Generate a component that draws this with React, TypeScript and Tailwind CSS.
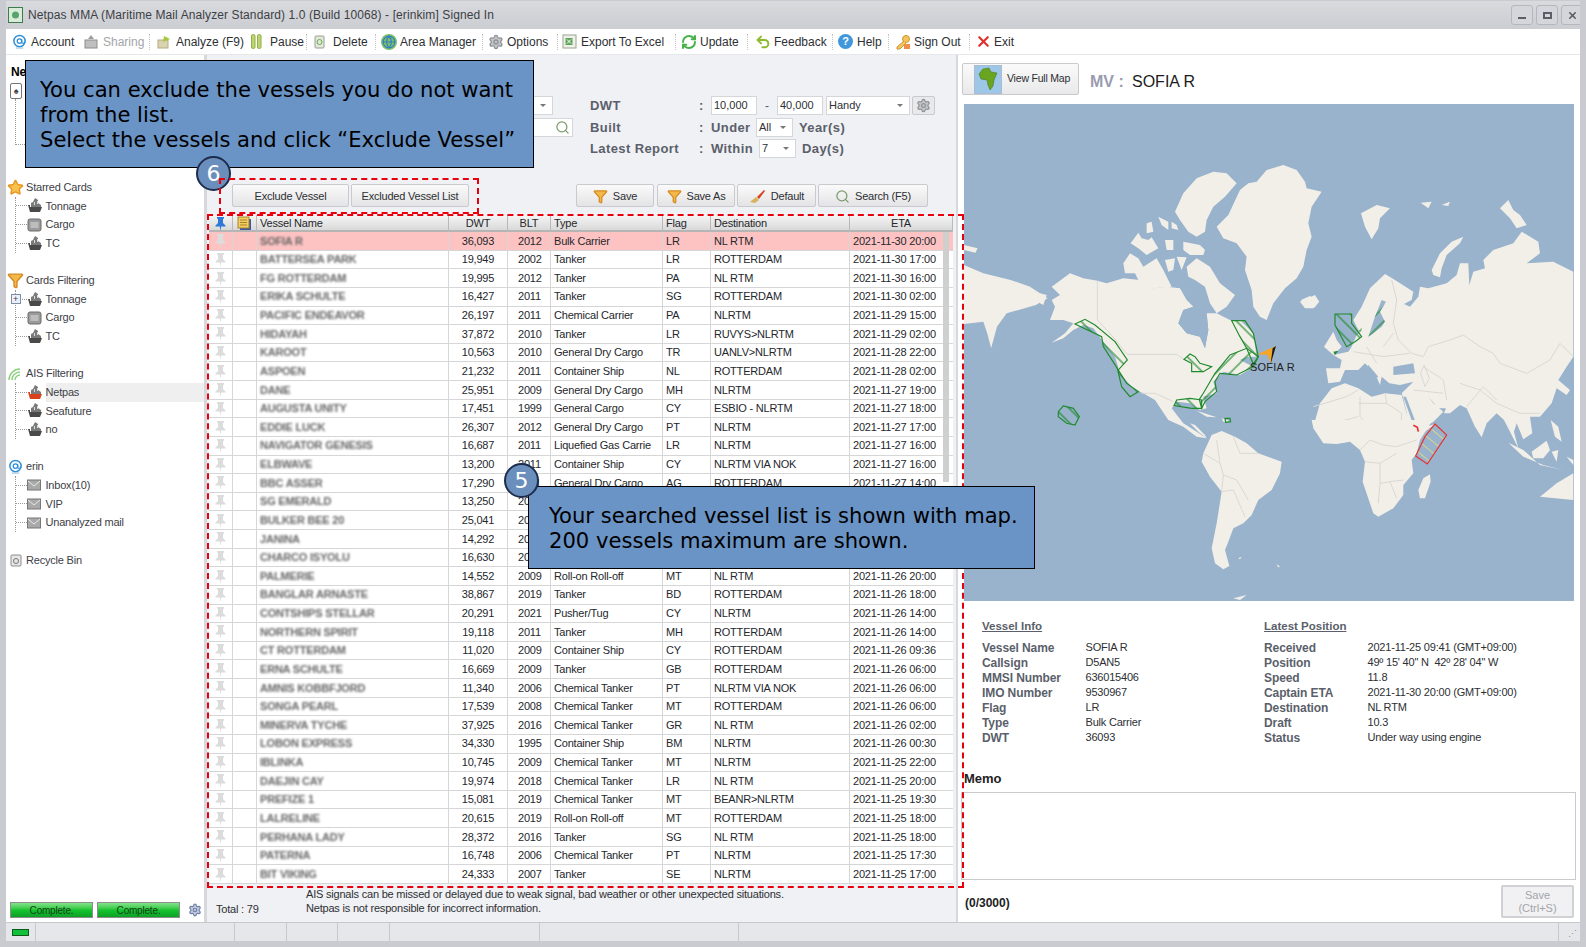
import { Filter, Globe, RefreshCw, Search, Settings, Star, Undo2, X } from "lucide-react";
import type { ReactNode } from "react";

type Row = [string, string, string, string, string, string, string];

const rows: Row[] = [
  ["SOFIA R", "36,093", "2012", "Bulk Carrier", "LR", "NL RTM", "2021-11-30 20:00"],
  ["BATTERSEA PARK", "19,949", "2002", "Tanker", "LR", "ROTTERDAM", "2021-11-30 17:00"],
  ["FG ROTTERDAM", "19,995", "2012", "Tanker", "PA", "NL RTM", "2021-11-30 16:00"],
  ["ERIKA SCHULTE", "16,427", "2011", "Tanker", "SG", "ROTTERDAM", "2021-11-30 02:00"],
  ["PACIFIC ENDEAVOR", "26,197", "2011", "Chemical Carrier", "PA", "NLRTM", "2021-11-29 15:00"],
  ["HIDAYAH", "37,872", "2010", "Tanker", "LR", "RUVYS>NLRTM", "2021-11-29 02:00"],
  ["KAROOT", "10,563", "2010", "General Dry Cargo", "TR", "UANLV>NLRTM", "2021-11-28 22:00"],
  ["ASPOEN", "21,232", "2011", "Container Ship", "NL", "ROTTERDAM", "2021-11-28 02:00"],
  ["DANE", "25,951", "2009", "General Dry Cargo", "MH", "NLRTM", "2021-11-27 19:00"],
  ["AUGUSTA UNITY", "17,451", "1999", "General Cargo", "CY", "ESBIO - NLRTM", "2021-11-27 18:00"],
  ["EDDIE LUCK", "26,307", "2012", "General Dry Cargo", "PT", "NLRTM", "2021-11-27 17:00"],
  ["NAVIGATOR GENESIS", "16,687", "2011", "Liquefied Gas Carrie", "LR", "NLRTM", "2021-11-27 16:00"],
  ["ELBWAVE", "13,200", "2011", "Container Ship", "CY", "NLRTM VIA NOK", "2021-11-27 16:00"],
  ["BBC ASSER", "17,290", "2011", "General Dry Cargo", "AG", "ROTTERDAM", "2021-11-27 14:00"],
  // the next four rows sit behind callout 5, only the start of the year shows
  ["SG EMERALD", "13,250", "20", "", "", "", ""],
  ["BULKER BEE 20", "25,041", "20", "", "", "", ""],
  ["JANINA", "14,292", "20", "", "", "", ""],
  ["CHARCO ISYOLU", "16,630", "20", "", "", "", ""],
  ["PALMERIE", "14,552", "2009", "Roll-on Roll-off", "MT", "NL RTM", "2021-11-26 20:00"],
  ["BANGLAR ARNASTE", "38,867", "2019", "Tanker", "BD", "ROTTERDAM", "2021-11-26 18:00"],
  ["CONTSHIPS STELLAR", "20,291", "2021", "Pusher/Tug", "CY", "NLRTM", "2021-11-26 14:00"],
  ["NORTHERN SPIRIT", "19,118", "2011", "Tanker", "MH", "ROTTERDAM", "2021-11-26 14:00"],
  ["CT ROTTERDAM", "11,020", "2009", "Container Ship", "CY", "ROTTERDAM", "2021-11-26 09:36"],
  ["ERNA SCHULTE", "16,669", "2009", "Tanker", "GB", "ROTTERDAM", "2021-11-26 06:00"],
  ["AMNIS KOBBFJORD", "11,340", "2006", "Chemical Tanker", "PT", "NLRTM VIA NOK", "2021-11-26 06:00"],
  ["SONGA PEARL", "17,539", "2008", "Chemical Tanker", "MT", "ROTTERDAM", "2021-11-26 06:00"],
  ["MINERVA TYCHE", "37,925", "2016", "Chemical Tanker", "GR", "NL RTM", "2021-11-26 02:00"],
  ["LOBON EXPRESS", "34,330", "1995", "Container Ship", "BM", "NLRTM", "2021-11-26 00:30"],
  ["IBLINKA", "10,745", "2009", "Chemical Tanker", "MT", "NLRTM", "2021-11-25 22:00"],
  ["DAEJIN CAY", "19,974", "2018", "Chemical Tanker", "LR", "NL RTM", "2021-11-25 20:00"],
  ["PREFIZE 1", "15,081", "2019", "Chemical Tanker", "MT", "BEANR>NLRTM", "2021-11-25 19:30"],
  ["LALRELINE", "20,615", "2019", "Roll-on Roll-off", "MT", "ROTTERDAM", "2021-11-25 18:00"],
  ["PERHANA LADY", "28,372", "2016", "Tanker", "SG", "NL RTM", "2021-11-25 18:00"],
  ["PATERNA", "16,748", "2006", "Chemical Tanker", "PT", "NLRTM", "2021-11-25 17:30"],
  ["BIT VIKING", "24,333", "2007", "Tanker", "SE", "NLRTM", "2021-11-25 17:00"],
];

const vesselInfo = [
  ["Vessel Name", "SOFIA R", "Received", "2021-11-25 09:41 (GMT+09:00)"],
  ["Callsign", "D5AN5", "Position", "49º 15' 40\" N  42º 28' 04\" W"],
  ["MMSI Number", "636015406", "Speed", "11.8"],
  ["IMO Number", "9530967", "Captain ETA", "2021-11-30 20:00 (GMT+09:00)"],
  ["Flag", "LR", "Destination", "NL RTM"],
  ["Type", "Bulk Carrier", "Draft", "10.3"],
  ["DWT", "36093", "Status", "Under way using engine"],
];

function ShipIcon({ color = "#4a4a4a", accent = "#7a7a7a" }: { color?: string; accent?: string }) {
  return (
    <svg width="15" height="15" viewBox="0 0 15 15" className="shrink-0">
      <path d="M8 0l3 2v3l3 2v2H4V5l2-1z" fill={accent} />
      <path d="M1 7h2v2l12 0-2 5H3z" fill={color} />
      <path d="M10 3h1v3h-1zM7 4h1v3H7z" fill="#ddd" />
    </svg>
  );
}

function CargoIcon() {
  return (
    <svg width="15" height="14" viewBox="0 0 15 14" className="shrink-0">
      <rect x="1" y="1" width="13" height="12" rx="2" fill="#9a9a9a" stroke="#6c6c6c" />
      <rect x="3.500" y="4" width="8" height="6" fill="#bdbdbd" />
    </svg>
  );
}

function MailIcon() {
  return (
    <svg width="14" height="12" viewBox="0 0 14 12" className="shrink-0">
      <rect x="0.500" y="1" width="13" height="10" fill="#a9a9a9" stroke="#777" />
      <path d="M1 2l6 5 6-5" fill="none" stroke="#e8e8e8" />
    </svg>
  );
}

function AtIcon({ size = 15 }: { size?: number }) {
  return (
    <svg width={size} height={size} viewBox="0 0 16 16" className="shrink-0">
      <circle cx="8" cy="7.500" r="6" fill="none" stroke="#2f8fd8" strokeWidth="1.600" />
      <circle cx="8" cy="7.500" r="2.400" fill="none" stroke="#2f8fd8" strokeWidth="1.400" />
      <path d="M10.400 5.500v3.400c0 1.600 3.200 1.200 3.500-.8" fill="none" stroke="#2f8fd8" strokeWidth="1.200" />
      <path d="M4 15h8" stroke="#a9c9e6" strokeWidth="1.400" />
    </svg>
  );
}

function Pin({ color = "#dcdcdc" }: { color?: string }) {
  return (
    <svg width="13" height="15" viewBox="0 0 13 15">
      <path d="M3 1h7v1.500L9 3v4l2.500 2.500V10.500H7.200L6.500 15l-.7-4.500H1.500V9.500L4 7V3L3 2.500z" fill={color} />
    </svg>
  );
}

function Tool({ icon, label, width, muted }: { icon: ReactNode; label: string; width: string; muted?: boolean }) {
  return (
    <div className={`flex h-full shrink-0 items-center ${width} ${muted ? "text-[#a3a5a9]" : "text-[#2d2f33]"}`}>
      <span className="flex w-[19px] shrink-0 items-center">{icon}</span>
      <span className="whitespace-nowrap pt-[1px]">{label}</span>
    </div>
  );
}

function Sep() {
  return <span className="h-[16px] w-px shrink-0 border-l border-dotted border-[#c4c4c4]" />;
}

function Toolbar() {
  return (
    <div className="flex h-[26px] shrink-0 items-center border-b border-[#e6e7ea] bg-white pl-[6px] text-[12px]">
      <Tool width="w-[72px]" label="Account" icon={<AtIcon />} />
      <Tool
        width="w-[65px]"
        muted
        label="Sharing"
        icon={
          <svg width="14" height="15" viewBox="0 0 14 15">
            <rect x="1" y="6" width="12" height="8" fill="#bfbfbf" stroke="#8d8d8d" />
            <path d="M4 5l3-4 3 4z" fill="#9d9d9d" />
          </svg>
        }
      />
      <Sep />
      <div className="ml-[7px] h-full">
        <Tool
          width="w-[94px]"
          label="Analyze (F9)"
          icon={
            <svg width="14" height="14" viewBox="0 0 14 14">
              <rect x="1" y="5" width="10" height="8" fill="#d9d3b0" stroke="#b5ac85" />
              <path d="M6 7l1-6 6 3z" fill="#a7c83c" />
            </svg>
          }
        />
      </div>
      <Tool
        width="w-[55px]"
        label="Pause"
        icon={
          <svg width="11" height="15" viewBox="0 0 11 15">
            <rect x="0.500" y="0.500" width="3.500" height="14" rx="1.500" fill="#bdd66b" stroke="#93ae49" />
            <rect x="6.500" y="0.500" width="3.500" height="14" rx="1.500" fill="#bdd66b" stroke="#93ae49" />
          </svg>
        }
      />
      <Sep />
      <div className="ml-[7px] h-full">
        <Tool
          width="w-[61px]"
          label="Delete"
          icon={
            <svg width="11" height="15" viewBox="0 0 11 15">
              <rect x="1" y="2" width="9" height="12" rx="1" fill="#e4e8dc" stroke="#9aa091" />
              <circle cx="5.500" cy="8" r="2.500" fill="none" stroke="#62ad4f" />
            </svg>
          }
        />
      </div>
      <Sep />
      <div className="ml-[5px] h-full">
        <Tool
          width="w-[101px]"
          label="Area Manager"
          icon={
            <span className="flex size-[16px] items-center justify-center rounded-full bg-[#7fbf6a]">
              <Globe size={14} color="#2f7fc2" strokeWidth={2} />
            </span>
          }
        />
      </div>
      <Sep />
      <div className="ml-[5px] h-full">
        <Tool width="w-[69px]" label="Options" icon={<Settings size={16} color="#8f9296" fill="#c4c6c9" />} />
      </div>
      <Sep />
      <div className="ml-[4px] h-full">
        <Tool
          width="w-[113px]"
          label="Export To Excel"
          icon={
            <svg width="15" height="15" viewBox="0 0 15 15">
              <rect x="1" y="1" width="13" height="13" fill="#eef1ea" stroke="#9aa48f" />
              <rect x="3.500" y="4" width="7" height="7" fill="#5fa35a" />
              <path d="M5 5.500l4 4M9 5.500l-4 4" stroke="#fff" />
            </svg>
          }
        />
      </div>
      <Sep />
      <div className="ml-[5px] h-full">
        <Tool width="w-[66px]" label="Update" icon={<RefreshCw size={16} color="#47b24a" strokeWidth={3} />} />
      </div>
      <Sep />
      <div className="ml-[7px] h-full">
        <Tool width="w-[77px]" label="Feedback" icon={<Undo2 size={16} color="#8dbb2f" strokeWidth={3} />} />
      </div>
      <Sep />
      <div className="ml-[5px] h-full">
        <Tool
          width="w-[50px]"
          label="Help"
          icon={
            <span className="flex size-[15px] items-center justify-center rounded-full bg-[#3f97dc] text-[11px] font-bold text-white">
              ?
            </span>
          }
        />
      </div>
      <Sep />
      <div className="ml-[6px] h-full">
        <Tool
          width="w-[74px]"
          label="Sign Out"
          icon={
            <svg width="17" height="16" viewBox="0 0 17 16">
              <circle cx="11" cy="5" r="3.500" fill="#f3c65c" stroke="#cf9430" />
              <path d="M9 7l-7 6v2h3l6-6" fill="#f3c65c" stroke="#cf9430" />
              <rect x="9" y="10" width="6" height="5" fill="#ef8d4a" />
            </svg>
          }
        />
      </div>
      <Sep />
      <div className="ml-[5px] h-full">
        <Tool width="w-[50px]" label="Exit" icon={<X size={17} color="#e0322c" strokeWidth={3} />} />
      </div>
    </div>
  );
}

function TreeGroup({ icon, label, children }: { icon: ReactNode; label: string; children?: ReactNode }) {
  return (
    <div>
      <div className="flex h-[18.63px] items-center">
        <span className="flex w-[19px] shrink-0 justify-center">{icon}</span>
        <span className="ml-[1px] whitespace-nowrap">{label}</span>
      </div>
      {children ? <div className="ml-[8.500px] border-l border-dotted border-[#9a9a9a]">{children}</div> : null}
    </div>
  );
}

function TreeItem({ icon, label, active, expander }: { icon: ReactNode; label: string; active?: boolean; expander?: boolean }) {
  return (
    <div className="relative flex h-[18.63px] items-center">
      <span className="h-px w-[11px] shrink-0 border-t border-dotted border-[#9a9a9a]" />
      {expander ? (
        <span className="absolute left-[-5px] flex size-[10px] items-center justify-center border border-[#7f8ea8] bg-[#eef2f8] text-[9px] leading-none text-[#33415c]">
          +
        </span>
      ) : null}
      <span className="flex w-[19px] shrink-0">{icon}</span>
      <span className={`flex h-full flex-1 items-center whitespace-nowrap ${active ? "bg-[#efefef]" : ""}`}>{label}</span>
    </div>
  );
}

function LeftPanel() {
  return (
    <div className="flex w-[198px] shrink-0 flex-col bg-white text-[11px] tracking-[-0.2px] text-[#3d4046]">
      <div className="h-[123px] shrink-0 pl-[5px] pt-[8px]">
        <div className="text-[12px] font-bold text-black">Ne</div>
        <div className="ml-[-1px] mt-[2px] flex h-[16px] w-[12px] items-center justify-center rounded-[2px] border border-[#777] text-[9px] leading-none">♠</div>
        <div className="ml-[4px] h-[46px] w-[12px] border-b border-l border-dotted border-[#9a9a9a]" />
      </div>
      <TreeGroup icon={<Star size={17} color="#e8951f" fill="#f7c14a" />} label="Starred Cards">
        <TreeItem icon={<ShipIcon />} label="Tonnage" />
        <TreeItem icon={<CargoIcon />} label="Cargo" />
        <TreeItem icon={<ShipIcon />} label="TC" />
      </TreeGroup>
      <div className="h-[18.63px]" />
      <TreeGroup icon={<Filter size={17} color="#d58a1c" fill="#f2b84a" />} label="Cards Filtering">
        <TreeItem icon={<ShipIcon />} label="Tonnage" expander />
        <TreeItem icon={<CargoIcon />} label="Cargo" />
        <TreeItem icon={<ShipIcon />} label="TC" />
      </TreeGroup>
      <div className="h-[18.63px]" />
      <TreeGroup
        icon={
          <svg width="17" height="16" viewBox="0 0 17 16">
            <path d="M2 14a11 11 0 0 1 11-11M5 14a8 8 0 0 1 8-8M8 14a5 5 0 0 1 5-5" fill="none" stroke="#8ccf7e" strokeWidth="1.400" />
          </svg>
        }
        label="AIS Filtering"
      >
        <TreeItem icon={<ShipIcon color="#d9401c" />} label="Netpas" active />
        <TreeItem icon={<ShipIcon />} label="Seafuture" />
        <TreeItem icon={<ShipIcon />} label="no" />
      </TreeGroup>
      <div className="h-[18.63px]" />
      <TreeGroup icon={<AtIcon />} label="erin">
        <TreeItem icon={<MailIcon />} label="Inbox(10)" />
        <TreeItem icon={<MailIcon />} label="VIP" />
        <TreeItem icon={<MailIcon />} label="Unanalyzed mail" />
      </TreeGroup>
      <div className="h-[18.63px]" />
      <TreeGroup
        icon={
          <svg width="12" height="14" viewBox="0 0 12 14">
            <rect x="1" y="2" width="10" height="11" rx="1" fill="#e6e6e6" stroke="#8e8e8e" />
            <circle cx="6" cy="8" r="2.500" fill="none" stroke="#777" />
          </svg>
        }
        label="Recycle Bin"
      />
      <div className="mt-auto flex h-[20px] items-start gap-[4px] pl-[4px]">
        <GreenBar />
        <GreenBar />
        <Settings size={14} color="#6f7fa5" fill="#c3cbe0" className="ml-[4px] mt-[1px]" />
      </div>
    </div>
  );
}

function GreenBar() {
  return (
    <div className="flex h-[16px] w-[83px] items-center justify-center border border-[#8d8d8d] bg-gradient-to-b from-[#7fe38a] via-[#14c52f] to-[#0da026] text-[10px] text-[#14401a]">
      Complete.
    </div>
  );
}

function Field({ children, className, arrow }: { children?: ReactNode; className: string; arrow?: boolean }) {
  return (
    <div className={`flex h-[19px] shrink-0 items-center justify-between border border-[#d5d6da] bg-white pl-[2px] pr-[6px] text-[11px] text-[#2d2f33] ${className}`}>
      <span>{children}</span>
      {arrow ? <span className="size-0 border-x-[3px] border-t-[3px] border-x-transparent border-t-[#777]" /> : null}
    </div>
  );
}

function Btn({ children, className }: { children: ReactNode; className: string }) {
  return (
    <div className={`flex h-full shrink-0 items-center justify-center gap-[5px] rounded-[2px] border border-[#c9cacd] bg-gradient-to-b from-[#fafafa] to-[#e4e4e6] pt-[1px] text-[11px] tracking-[-0.2px] text-[#2d2f33] ${className}`}>
      {children}
    </div>
  );
}

function FormLabel({ children }: { children: ReactNode }) {
  return <span className="w-[109px] shrink-0 text-[13px] font-bold tracking-[0.4px] text-[#5b5f6b]">{children}</span>;
}

function Colon() {
  return <span className="w-[12px] shrink-0 text-[13px] font-bold text-[#5b5f6b]">:</span>;
}

function SearchForm() {
  return (
    <div className="flex h-[129px] shrink-0 pl-[213px] pt-[41px]">
      <div className="w-[170px] shrink-0">
        <Field className="w-[133px]" arrow />
        <div className="relative mt-[3px] h-[19px] w-[153px] border border-[#d5d6da] bg-white">
          <Search size={15} color="#7d9a6a" className="absolute right-[2px] top-[1px]" />
        </div>
      </div>
      <div className="flex flex-col">
        <div className="flex h-[19px] items-center">
          <FormLabel>DWT</FormLabel>
          <Colon />
          <Field className="w-[46px]">10,000</Field>
          <span className="w-[20px] text-center text-[12px] text-[#5b5f6b]">-</span>
          <Field className="w-[46px]">40,000</Field>
          <Field className="ml-[3px] w-[84px]" arrow>Handy</Field>
          <div className="ml-[2px] flex h-[19px] w-[23px] items-center justify-center rounded-[2px] border border-[#c9cacd] bg-[#e9e9eb]">
            <Settings size={15} color="#8f9296" fill="#c4c6c9" />
          </div>
        </div>
        <div className="mt-[3px] flex h-[19px] items-center">
          <FormLabel>Built</FormLabel>
          <Colon />
          <span className="w-[45px] shrink-0 text-[13px] font-bold tracking-[0.4px] text-[#5b5f6b]">Under</span>
          <Field className="w-[37px]" arrow>All</Field>
          <span className="ml-[6px] text-[13px] font-bold tracking-[0.4px] text-[#5b5f6b]">Year(s)</span>
        </div>
        <div className="mt-[2px] flex h-[19px] items-center">
          <FormLabel>Latest Report</FormLabel>
          <Colon />
          <span className="w-[48px] shrink-0 text-[13px] font-bold tracking-[0.4px] text-[#5b5f6b]">Within</span>
          <Field className="w-[37px]" arrow>7</Field>
          <span className="ml-[6px] text-[13px] font-bold tracking-[0.4px] text-[#5b5f6b]">Day(s)</span>
        </div>
      </div>
    </div>
  );
}

function ActionRow() {
  return (
    <div className="flex h-[23px] shrink-0 pl-[25px]">
      <Btn className="w-[117px]">Exclude Vessel</Btn>
      <Btn className="ml-[2px] w-[118px]">Excluded Vessel List</Btn>
      <Btn className="ml-[107px] w-[78px]">
        <Filter size={15} color="#d58a1c" fill="#f2b84a" /> Save
      </Btn>
      <Btn className="ml-[3px] w-[78px]">
        <Filter size={15} color="#d58a1c" fill="#f2b84a" /> Save As
      </Btn>
      <Btn className="ml-[2px] w-[79px]">
        <svg width="17" height="15" viewBox="0 0 17 15">
          <path d="M1 13l6-5 3 3-4 3z" fill="#d8b25e" />
          <path d="M8 8l7-7 1 1-6 8z" fill="#d9401c" />
        </svg>
        Default
      </Btn>
      <Btn className="ml-[2px] w-[110px]">
        <Search size={15} color="#7d9a6a" /> Search (F5)
      </Btn>
    </div>
  );
}

function HeaderCell({ children, className }: { children?: ReactNode; className?: string }) {
  return <div className={`flex items-center border-r border-[#b9b9b9] px-[3px] ${className ?? ""}`}>{children}</div>;
}

function VesselTable() {
  return (
    <div className="relative ml-[2px] mt-[8px] w-[744px] shrink-0 text-[11px] tracking-[-0.2px] text-[#25272b]">
      <div className="grid h-[17px] grid-cols-[24px_24px_192px_59px_43px_112px_48px_139px_1fr] border-b-2 border-[#b5b5b5] bg-gradient-to-b from-[#f6f6f6] to-[#d9d9d9]">
        <HeaderCell className="justify-center"><Pin color="#2f78d8" /></HeaderCell>
        <HeaderCell className="justify-center">
          <svg width="15" height="15" viewBox="0 0 15 15">
            <rect x="3" y="3" width="11" height="11" fill="#3b5aa0" />
            <rect x="1" y="1" width="11" height="11" fill="#f3cf62" stroke="#a9802a" />
            <path d="M3 4h7M3 6.500h7M3 9h7" stroke="#a9802a" />
          </svg>
        </HeaderCell>
        <HeaderCell>Vessel Name</HeaderCell>
        <HeaderCell className="justify-center">DWT</HeaderCell>
        <HeaderCell className="justify-center">BLT</HeaderCell>
        <HeaderCell>Type</HeaderCell>
        <HeaderCell>Flag</HeaderCell>
        <HeaderCell>Destination</HeaderCell>
        <HeaderCell className="justify-center">ETA</HeaderCell>
      </div>
      {rows.map((row, index) => (
        <div
          key={row[0]}
          className={`grid h-[18.63px] grid-cols-[24px_24px_192px_59px_43px_112px_48px_139px_1fr] border-b border-[#d6d6d6] ${index === 0 ? "bg-[#fdc3c3]" : "bg-white"}`}
        >
          <div className="flex items-center justify-center border-r border-[#d6d6d6]"><Pin /></div>
          <div className="border-r border-[#d6d6d6]" />
          <div className="flex items-center border-r border-[#d6d6d6] px-[3px]">
            <span className="whitespace-nowrap font-bold text-[#666] blur-[0.8px]">{row[0]}</span>
          </div>
          <div className="flex items-center justify-center border-r border-[#d6d6d6]">{row[1]}</div>
          <div className="flex items-center border-r border-[#d6d6d6] pl-[10px]">{row[2]}</div>
          <div className="flex items-center overflow-hidden whitespace-nowrap border-r border-[#d6d6d6] px-[3px]">{row[3]}</div>
          <div className="flex items-center border-r border-[#d6d6d6] px-[3px]">{row[4]}</div>
          <div className="flex items-center whitespace-nowrap border-r border-[#d6d6d6] px-[3px]">{row[5]}</div>
          <div className="flex items-center whitespace-nowrap px-[3px]">{row[6]}</div>
        </div>
      ))}
      <div className="absolute left-[734px] top-[17px] h-[250px] w-[6px] bg-[#cfcfcf]" />
    </div>
  );
}

function Land({ d }: { d: string }) {
  return <polygon points={d} fill="#f2efe9" />;
}

function Sea({ d }: { d: string }) {
  return <polygon points={d} fill="#99b3cc" />;
}

function Line({ d }: { d: string }) {
  return <polyline points={d} fill="none" stroke="#dad8d3" strokeWidth="3" />;
}

function Zone({ d, hatch }: { d: string; hatch: string }) {
  return <polygon points={d} fill={`url(#${hatch})`} stroke={hatch === "hatch-red" ? "#e83030" : "#1f8a2c"} strokeWidth="3.500" />;
}

function WorldMap() {
  return (
    <div className="relative ml-[6px] mt-[9px] h-[497px] w-[610px] shrink-0 bg-[#99b3cc]">
      <svg className="block size-full" viewBox="964 104 610 497">
        <defs>
          <pattern id="hatch-down" width="30" height="30" patternUnits="userSpaceOnUse" patternTransform="rotate(-45)">
            <line x1="15" y1="0" x2="15" y2="30" stroke="#1f8a2c" strokeWidth="3.500" />
          </pattern>
          <pattern id="hatch-up" width="30" height="30" patternUnits="userSpaceOnUse" patternTransform="rotate(45)">
            <line x1="15" y1="0" x2="15" y2="30" stroke="#1f8a2c" strokeWidth="3.500" />
          </pattern>
          <pattern id="hatch-red" width="26" height="26" patternUnits="userSpaceOnUse" patternTransform="rotate(-50)">
            <line x1="13" y1="0" x2="13" y2="26" stroke="#d8d68a" strokeWidth="3" />
          </pattern>
        </defs>

        {/* west edge, traced from the wide crop */}
        <g transform="translate(960 100) scale(0.389 0.3333)">
          <Land d="10,495 60,520 130,540 180,560 225,595 195,615 120,640 95,680 80,745 70,700 60,665 10,672" />
          <Land d="10,435 45,445 40,458 10,450" />
        </g>

        {/* north america */}
        <g transform="translate(1040 160) scale(0.3333)">
          <Land d="530,200 565,165 600,90 625,70 650,65 680,30 730,15 770,30 795,65 800,85 845,95 815,140 805,190 815,230 800,270 790,320 770,355 735,385 700,430 680,480 660,470 640,440 635,390 615,330 620,290 590,250 550,235" />
          <Land d="405,155 430,100 470,55 520,35 560,40 590,70 555,110 520,140 500,180 495,215 470,230 445,215 420,180" />
          <Land d="355,170 385,185 385,210 365,195" />
          <Land d="395,185 410,195 415,210 395,205" />
          <Land d="320,190 335,185 340,215 320,220" />
          <Land d="272,250 295,218 305,235 325,240 335,232 355,265 320,285 295,265" />
          <Land d="375,240 400,240 400,270 380,270" />
          <Land d="430,245 480,255 495,270 490,285 450,285 430,270" />
          <Land d="250,310 270,280 295,295 310,320 350,295 370,330 395,380 340,385 300,370 285,340 255,340" />
          <Land d="375,300 405,295 400,330 385,335" />
          <Land d="410,290 440,292 425,330" />
          <Land d="440,320 470,295 510,320 540,370 585,405 560,440 530,460 510,430 495,380 465,360 445,350" />
          <Land d="35,380 90,340 130,355 172,362 200,370 250,355 300,360 340,385 380,380 420,385 440,420 460,440 430,450 415,490 440,520 480,530 495,565 505,510 500,460 530,460 570,480 600,480 640,520 650,590 620,590 600,600 640,620 600,645 550,635 520,665 530,700 490,710 500,745 480,750 450,730 410,725 395,745 430,790 470,815 500,835 470,830 430,800 385,780 345,720 310,700 300,695 275,680 240,640 225,590 190,545 160,505 130,495 100,510 70,535 35,548 75,520 100,490 70,480 30,480 45,440 35,420 60,405" />
          <Land d="0,400 20,405 10,435 0,430" />
          <Land d="470,752 530,772 500,770" />
          <Land d="545,775 575,785 550,785" />
          <Land d="780,425 825,405 838,425 820,445 795,445" />
          <Sea d="415,490 430,450 460,440 500,460 505,510 495,565 480,530 440,520" />
          <Line d="172,362 172,480 210,520 262,583 410,583 450,610" />
          <Line d="305,700 345,700 400,725" />
        </g>

        {/* eurasia and north africa */}
        <g transform="translate(1300 200) scale(0.3333)">
          <Land d="183,40 230,15 270,25 240,55 235,85 215,118 195,80" />
          <Land d="362,8 395,5 385,25" />
          <Land d="425,15 450,5 445,18" />
          <Land d="395,210 420,160 455,125 490,110 480,130 440,165 425,205 420,232 400,225" />
          <Land d="600,25 625,0 640,30 660,45 680,75 650,85 630,55" />
          <Land d="160,360 185,320 210,265 255,222 285,240 340,275 335,300 312,312 330,320 355,290 360,260 385,265 440,250 470,225 480,190 505,190 508,255 520,215 555,205 550,180 580,150 640,130 665,95 715,125 720,160 680,190 760,185 820,215 820,470 800,500 775,540 810,570 800,585 770,565 755,610 720,650 690,650 697,700 670,718 650,670 642,695 655,745 635,705 612,660 590,640 560,670 545,712 525,680 500,625 480,615 450,640 432,640 438,625 415,625 385,590 400,610 430,635 400,665 350,695 330,680 310,595 305,580 340,545 300,555 268,550 245,530 240,555 225,520 195,490 175,510 135,510 120,545 85,550 78,505 120,505 125,480 100,465 145,455 155,440 170,405 180,400" />
          <Land d="40,680 60,610 95,565 135,550 175,565 215,590 255,580 305,585 320,640 345,690 375,695 405,672 350,690 100,690" />
          <Land d="72,440 100,395 110,420 125,440 100,465" />
          <Land d="3,300 30,288 55,305 45,322 15,320" />
          <Land d="752,660 775,680 785,725 765,710" />
          <Land d="625,728 670,750 720,795 790,810 730,795 670,770" />
          <Land d="695,755 740,722 750,750 730,775 700,775" />
          <Land d="755,755 775,750 770,785" />
          <Land d="800,770 820,780 820,795" />
          <Land d="720,890 770,850 820,820 820,900" />
          <Sea d="245,300 258,305 240,335 255,365 245,380 220,400 205,410 215,380 225,350" />
          <Sea d="280,500 340,490 345,520 280,525" />
          <Sea d="205,495 235,530 225,535 200,505" />
          <Sea d="310,590 318,590 352,680 342,680" />
          <Line d="275,240 290,300 280,370 295,420 335,460 370,470 385,440 450,420 490,405 540,440 580,460 600,490 680,520 750,480 780,430 820,470" />
          <Line d="480,550 540,570 590,610 660,640 720,640" />
          <Line d="370,500 430,540 440,600" />
          <Line d="340,570 430,580" />
          <Line d="40,620 140,590 175,570" />
          <Line d="175,610 260,610 255,580" />
          <Line d="180,590 180,650 245,720 300,740" />
          <Line d="260,610 305,640 300,720" />
          <Line d="60,680 175,650" />
          <Line d="500,620 550,560 590,600" />
          <Line d="160,455 250,470 330,460" />
          <Line d="200,440 230,490" />
          <Line d="280,400 250,440" />
          <Line d="372,495 388,535 375,560 362,520 372,495" />
        </g>

        {/* south america, south africa */}
        <g transform="translate(1190 420) scale(0.3333)">
          <Land d="35,125 40,100 65,45 95,33 135,50 170,70 205,100 275,125 270,160 245,210 205,240 185,285 160,310 130,325 115,365 105,390 118,438 100,448 75,430 65,385 80,310 95,215 60,170" />
          <Land d="0,10 25,35 50,55 45,45 15,15" />
          <Land d="365,0 370,25 400,70 440,72 480,65 510,90 525,125 518,185 550,280 565,290 610,265 640,225 640,195 670,160 665,120 680,100 690,60 725,5 700,0" />
          <Land d="685,210 700,175 720,163 722,185 705,235 690,235" />
          <Land d="145,415 155,410 150,418" />
          <Land d="260,432 270,440 264,442" />
          <Land d="130,535 170,525 150,540" />
          <Line d="40,100 90,130 100,165 95,215" />
          <Line d="100,165 140,180 175,240" />
          <Line d="80,60 90,130" />
          <Line d="130,50 150,100 205,100" />
          <Line d="95,215 130,210 165,290" />
          <Line d="510,90 540,60 580,75 620,80 680,60" />
          <Line d="525,125 570,130 620,100" />
          <Line d="570,130 570,190 600,185 640,180" />
          <Line d="570,190 565,250" />
          <Line d="600,185 620,235" />
        </g>

        {/* traffic areas and vessel marker */}
        <g transform="translate(1040 160) scale(0.3333)">
          <Zone hatch="hatch-down" d="105,492 135,478 165,495 225,545 262,600 235,630 260,670 295,695 270,710 245,680 232,625 190,560 185,530" />
          <Zone hatch="hatch-down" d="575,482 615,482 640,520 655,590 640,612 620,565 600,530" />
          <Zone hatch="hatch-up" d="655,590 640,620 590,645 540,640 525,665 530,695 495,725 485,745 478,718 490,700 525,640 570,585 620,565" />
          <Zone hatch="hatch-down" d="402,737 410,720 450,715 485,720 485,745 455,745" />
          <Zone hatch="hatch-down" d="55,755 70,738 100,745 118,770 105,795 80,790 55,770" />
          <Zone hatch="hatch-down" d="432,598 450,582 465,590 480,610 515,620 490,635 455,635 455,610" />
          <Zone hatch="hatch-down" d="555,775 570,775 572,785 557,787" />
          <polygon points="652,583 708,558 692,610 683,585" fill="#f5a62a" />
          <polygon points="708,558 692,612 698,565" fill="#101820" />
        </g>
        <g transform="translate(1300 200) scale(0.3333)">
          <Zone hatch="hatch-down" d="105,342 155,342 155,370 185,410 165,425 140,440 105,375" />
          <polygon points="245,300 258,305 240,335 255,365 245,380 220,400 205,410 215,380 225,350" fill="url(#hatch-up)" />
          <polygon points="170,385 185,378 185,405" fill="url(#hatch-up)" />
          <polygon points="100,455 115,452 105,465" fill="#1f8a2c" />
          <Zone hatch="hatch-red" d="405,672 440,705 382,792 347,768 375,710" />
          <polyline points="340,676 352,682 355,695" fill="none" stroke="#e83030" strokeWidth="5" />
        </g>
      </svg>
      <span className="absolute left-[286px] top-[258px] text-[11px] leading-none tracking-[0.2px] text-[#222]">SOFIA R</span>
    </div>
  );
}

function RightPanel() {
  return (
    <div className="flex min-w-0 flex-1 flex-col bg-white text-[11px]">
      <div className="flex h-[40px] shrink-0 items-end">
        <div className="ml-[4px] flex h-[32px] w-[117px] items-center rounded-[2px] border border-[#c9cacd] bg-gradient-to-b from-[#fafafa] to-[#e9e9eb] pl-[11px]">
          <span className="flex h-[29px] w-[28px] items-center justify-center border border-[#a8bcd4] bg-[#9ec6e6]">
            <svg width="20" height="24" viewBox="0 0 20 24">
              <path d="M1 7l4-5 6-1 2 4 6 1-3 7-1 6-3 4-2-5-1-5-6-1z" fill="#6aa51f" stroke="#3d6f10" strokeWidth="0.500" />
            </svg>
          </span>
          <span className="ml-[5px] whitespace-nowrap text-[10.500px] tracking-[-0.2px] text-[#2d2f33]">View Full Map</span>
        </div>
        <div className="ml-[11px] flex h-[32px] items-center pt-[5px] text-[16px]">
          <span className="w-[42px] font-bold text-[#9a9cb0]">MV :</span>
          <span className="text-[#1c1c1c]">SOFIA R</span>
        </div>
      </div>
      <WorldMap />
      <div className="ml-[24px] shrink-0 pt-[19px]">
        <div className="flex h-[14px] items-center text-[11.500px] font-bold text-[#5b5f6b]">
          <span className="w-[282px] underline">Vessel Info</span>
          <span className="underline">Latest Position</span>
        </div>
        <div className="mt-[6px]">
          {vesselInfo.map((info) => (
            <div className="flex h-[15px] items-center" key={info[0]}>
              <span className="w-[103.500px] shrink-0 text-[12px] font-bold tracking-[-0.1px] text-[#5b5f6b]">{info[0]}</span>
              <span className="w-[178.500px] shrink-0 tracking-[-0.2px] text-[#2d2f33]">{info[1]}</span>
              <span className="w-[103.500px] shrink-0 text-[12px] font-bold tracking-[-0.1px] text-[#5b5f6b]">{info[2]}</span>
              <span className="whitespace-pre tracking-[-0.2px] text-[#2d2f33]">{info[3]}</span>
            </div>
          ))}
        </div>
      </div>
      <div className="ml-[6px] mt-[27px] flex h-[14px] shrink-0 items-center text-[13px] font-bold text-[#222]">Memo</div>
      <div className="ml-[3px] mt-[6px] h-[88px] w-[615px] shrink-0 border border-[#c9cacd] bg-white" />
      <div className="flex flex-1 items-start justify-between pl-[7px] pr-[6px] pt-[5px]">
        <span className="mt-[9px] text-[12px] font-bold text-[#222]">(0/3000)</span>
        <div className="flex h-[33px] w-[73px] flex-col items-center justify-center rounded-[2px] border-2 border-[#d0d1d4] bg-[#f1f1f3] text-[11px] leading-[13px] text-[#a3a5a9]">
          <span>Save</span>
          <span>(Ctrl+S)</span>
        </div>
      </div>
    </div>
  );
}

function StatusBar() {
  return (
    <div className="flex h-[19px] shrink-0 border-t border-[#c6c8cc] bg-[#e6e7ea]">
      <div className="flex w-[30px] items-center border-r border-[#c6c8cc] pl-[6px]">
        <span className="h-[7px] w-[17px] border border-[#0c5c1c] bg-[#12c03a]" />
      </div>
      <div className="w-[199px] border-r border-[#c6c8cc]" />
      <div className="w-[52px] border-r border-[#c6c8cc]" />
      <div className="w-[51px] border-r border-[#c6c8cc]" />
      <div className="w-[52px] border-r border-[#c6c8cc]" />
      <div className="w-[150px] border-r border-[#c6c8cc]" />
      <div className="w-[199px] border-r border-[#c6c8cc]" />
      <div className="w-[820px] border-r border-[#c6c8cc]" />
      <div className="flex flex-1 items-end justify-end pb-[2px] pr-[3px] text-[9px] leading-none text-[#8d8d8d]">⋰</div>
    </div>
  );
}

export default function App() {
  return (
    <div className="relative flex h-[947px] w-[1586px] flex-col overflow-hidden border-x-[6px] border-b-[6px] border-t border-[#c9cbd0] bg-[#c9cbd0] font-['Liberation_Sans',sans-serif]">
      {/* title bar */}
      <div className="flex h-[28px] shrink-0 items-center bg-gradient-to-b from-[#d9dade] to-[#cbcdd2] pl-[2px] text-[12px] text-[#3c3f44]">
        <svg width="15" height="16" viewBox="0 0 15 16" className="shrink-0">
          <rect x="0.500" y="0.500" width="14" height="15" fill="#d9ecd9" stroke="#3d7d4d" />
          <circle cx="7.500" cy="8" r="3.500" fill="#58a56b" />
        </svg>
        <span className="ml-[5px] whitespace-nowrap tracking-[0.1px]">Netpas MMA (Maritime Mail Analyzer Standard) 1.0 (Build 10068) - [erinkim] Signed In</span>
        <div className="ml-auto mr-[-3px] flex gap-[3px]">
          <span className="flex h-[20px] w-[22px] items-end justify-center rounded-[3px] border border-[#b5b7bc] bg-[#d5d6db] pb-[5px]">
            <span className="h-[2px] w-[8px] bg-[#5b5e66]" />
          </span>
          <span className="flex h-[20px] w-[22px] items-center justify-center rounded-[3px] border border-[#b5b7bc] bg-[#d5d6db]">
            <span className="h-[7px] w-[9px] border-2 border-[#5b5e66]" />
          </span>
          <span className="flex h-[20px] w-[22px] items-center justify-center rounded-[3px] border border-[#b5b7bc] bg-[#d5d6db]">
            <X size={11} color="#5b5e66" strokeWidth={3.500} />
          </span>
        </div>
      </div>
      <Toolbar />
      <div className="flex min-h-0 flex-1">
        <LeftPanel />
        <div className="relative w-[3px] shrink-0 bg-[#d7d8dc]" />
        <div className="flex w-[749px] shrink-0 flex-col bg-[#f0f1f4]">
          <SearchForm />
          <ActionRow />
          <VesselTable />
          <div className="flex flex-1 items-start pl-[9px] text-[11px] tracking-[-0.2px] text-[#2d2f33]">
            <span className="mt-[17px] w-[90px] shrink-0">Total : 79</span>
            <div className="mt-[3px] leading-[14px]">
              <div>AIS signals can be missed or delayed due to weak signal, bad weather or other unexpected situations.</div>
              <div>Netpas is not responsible for incorrect information.</div>
            </div>
          </div>
        </div>
        <div className="w-[2px] shrink-0 bg-[#d7d8dc]" />
        <RightPanel />
      </div>
      <StatusBar />

      {/* annotations */}
      <div className="absolute left-[19px] top-[59px] flex h-[108px] w-[509px] flex-col justify-center whitespace-nowrap border border-black bg-[#6b94c6] pl-[14px] font-['DejaVu_Sans',sans-serif] text-[21.100px] leading-[25px] text-black">
        <div>You can exclude the vessels you do not want</div>
        <div>from the list.</div>
        <div>Select the vessels and click “Exclude Vessel”</div>
      </div>
      <div className="absolute left-[190px] top-[155px] flex size-[35px] items-center justify-center rounded-full border-2 border-[#1f2d4d] bg-[#6b8fbd] font-['DejaVu_Sans',sans-serif] text-[22px] text-white">
        6
      </div>
      <div className="absolute left-[213px] top-[177px] h-[36px] w-[260px] border-2 border-dashed border-[#e8000d]" />
      <div className="absolute left-[201px] top-[213px] h-[674px] w-[757px] border-2 border-dashed border-[#e8000d]" />
      <div className="absolute left-[522px] top-[485px] flex h-[83px] w-[507px] flex-col justify-center whitespace-nowrap border border-black bg-[#6b94c6] pl-[20px] font-['DejaVu_Sans',sans-serif] text-[21.100px] leading-[25px] text-black">
        <div>Your searched vessel list is shown with map.</div>
        <div>200 vessels maximum are shown.</div>
      </div>
      <div className="absolute left-[498px] top-[462px] flex size-[35px] items-center justify-center rounded-full border-2 border-[#1f2d4d] bg-[#6b8fbd] font-['DejaVu_Sans',sans-serif] text-[22px] text-white">
        5
      </div>
    </div>
  );
}
